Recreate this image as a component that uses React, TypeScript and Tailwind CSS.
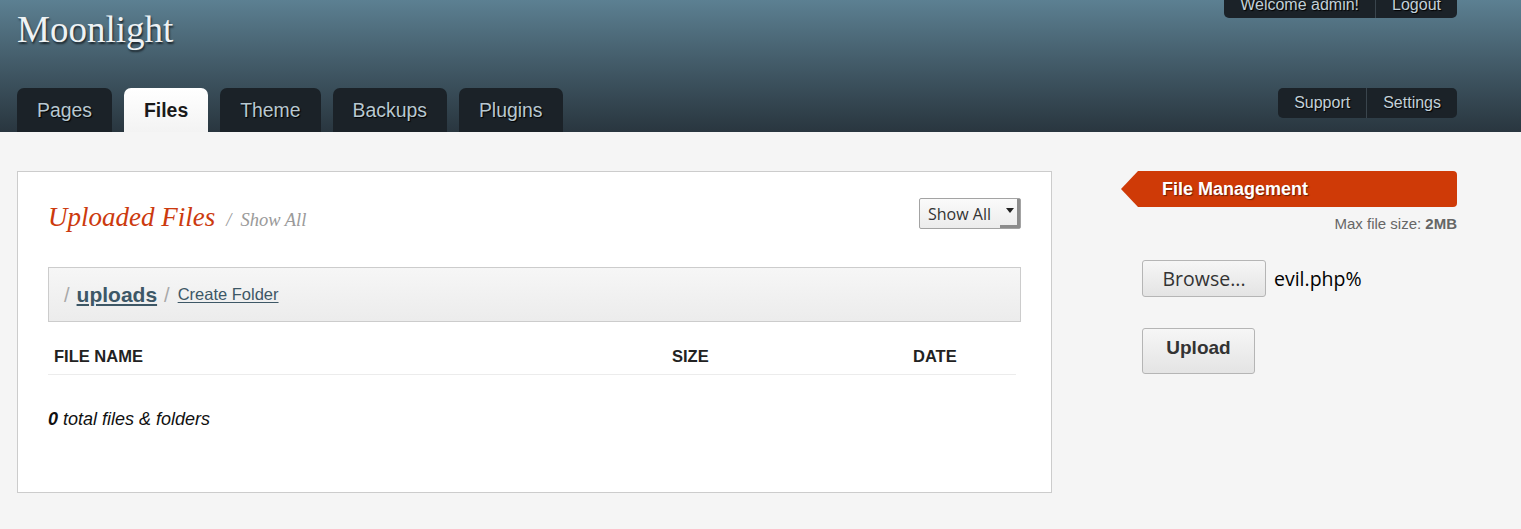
import type { ReactNode } from "react";

const SANS = "font-['Liberation_Sans',Arial,sans-serif]";
const SERIF = "font-['Liberation_Serif','Times_New_Roman',serif]";
const OPEN = "font-['Open_Sans','Noto_Sans',sans-serif]";

const TABS = ["Pages", "Files", "Theme", "Backups", "Plugins"];

function Tab({ label, active }: { label: string; active?: boolean }) {
  return (
    <div
      className={`flex h-[44px] items-center rounded-t-[7px] px-5 pt-[2px] text-[19.4px] ${
        active
          ? "bg-gradient-to-b from-white to-[#f3f3f3] font-bold text-[#1a1a1a]"
          : "bg-[#1b2228] text-[#b8c8d1] [text-shadow:1px_1px_1px_#000]"
      }`}
    >
      {label}
    </div>
  );
}

function DarkGroup({
  items,
  className,
}: {
  items: string[];
  className: string;
}) {
  return (
    <div className={`flex bg-[#1b2228] text-[16px] text-[#c2d0d8] ${className}`}>
      {items.map((item, i) => (
        <div
          key={item}
          className={`flex items-center px-4 [text-shadow:1px_1px_1px_#000] ${
            i > 0 ? "border-l border-[#3a454d]" : ""
          }`}
        >
          {item}
        </div>
      ))}
    </div>
  );
}

function Button({
  children,
  className,
}: {
  children: ReactNode;
  className: string;
}) {
  return (
    <div
      className={`flex items-center justify-center rounded-[3px] border border-[#b5b5b5] bg-gradient-to-b from-[#f6f6f6] to-[#e4e4e4] text-[#333] ${className}`}
    >
      {children}
    </div>
  );
}

export default function App() {
  return (
    <div className={`min-h-[529px] bg-[#f5f5f5] ${SANS}`}>
      {/* header */}
      <div className="h-[132px] overflow-hidden bg-gradient-to-b from-[#5c8092] to-[#29363f]">
        <div className="ml-[17px] flex h-full w-[1440px] flex-col justify-between">
          <div className="flex items-start justify-between">
            <div
              className={`pt-[6px] text-[37px] leading-[48px] text-[#eef2f4] [text-shadow:1px_2px_2px_#1c262d] ${SERIF}`}
            >
              Moonlight
            </div>
            <DarkGroup
              items={["Welcome admin!", "Logout"]}
              className="-mt-[9px] h-[27px] rounded-b-[5px]"
            />
          </div>
          <div className="flex items-end justify-between">
            <div className="flex gap-3">
              {TABS.map((t) => (
                <Tab key={t} label={t} active={t === "Files"} />
              ))}
            </div>
            <DarkGroup
              items={["Support", "Settings"]}
              className="mb-[14px] h-[30px] rounded-[5px]"
            />
          </div>
        </div>
      </div>

      {/* body */}
      <div className="ml-[17px] flex w-[1440px] items-start gap-[69px] pt-[39px]">
        <div className="w-[1035px] border border-[#cccccc] bg-white px-[30px] pb-[61px] pt-[26px]">
          <div className="flex h-[31px] items-center justify-between">
            <div className={`mt-[8px] flex items-baseline italic ${SERIF}`}>
              <span className="text-[27px] text-[#cc3a0e]">Uploaded Files</span>
              <span className="ml-[11px] text-[18.5px] text-[#9a9a9a]">/</span>
              <span className="ml-[9px] text-[18.5px] text-[#9a9a9a]">Show All</span>
            </div>
            <div
              className={`flex h-[31px] w-[102px] items-center justify-between rounded-[2px] border border-[#a3a3a3] bg-gradient-to-b from-[#fafafa] to-[#ececec] pl-[8px] text-[16px] text-[#333] ${OPEN}`}
            >
              <span>Show All</span>
              <span className="flex h-full w-[20px] items-start justify-center pt-[9px] shadow-[inset_-3px_-3px_0_#8c8c8c]">
                <span className="h-0 w-0 border-x-[4px] border-t-[5px] border-x-transparent border-t-[#222]" />
              </span>
            </div>
          </div>

          <div className="mt-[38px] flex h-[55px] items-center gap-[7px] border border-[#cccccc] bg-gradient-to-b from-[#f6f6f6] to-[#ececec] px-[15px]">
            <span className="text-[20px] text-[#a8a8a8]">/</span>
            <span className="text-[21px] font-bold text-[#3d5766] underline underline-offset-2">
              uploads
            </span>
            <span className="text-[20px] text-[#a8a8a8]">/</span>
            <span className="ml-[1px] text-[16.5px] text-[#3d5766] underline underline-offset-2">
              Create Folder
            </span>
          </div>

          <div className="mt-[16px] grid h-[37px] w-[968px] grid-cols-[618px_241px_1fr] items-center border-b border-[#ececec] pl-[6px] text-[16.5px] font-bold text-[#222]">
            <span>FILE NAME</span>
            <span>SIZE</span>
            <span>DATE</span>
          </div>

          <div className="mt-[32px] text-[18px] leading-[24px] italic text-[#111]">
            <b>0</b> total files &amp; folders
          </div>
        </div>

        {/* sidebar */}
        <div className="flex w-[336px] flex-col">
          <div className="flex h-[36px] items-stretch">
            <span className="h-0 w-0 border-y-[18px] border-r-[17px] border-y-transparent border-r-[#cf3a07]" />
            <div className="flex flex-1 items-center rounded-r-[4px] bg-[#cf3a07] pl-[24px] text-[18px] font-bold text-white [text-shadow:1px_1px_1px_#6b1e04]">
              File Management
            </div>
          </div>
          <div className="mt-[8px] text-right text-[15px] leading-[18px] text-[#666]">
            Max file size: <b>2MB</b>
          </div>
          <div className={`ml-[21px] mt-[27px] flex items-center gap-[8px] text-[19.5px] ${OPEN}`}>
            <Button className="h-[37px] w-[124px]">Browse...</Button>
            <span className="text-black">evil.php%</span>
          </div>
          <Button className="ml-[21px] mt-[31px] h-[46px] w-[113px] pb-[5px] text-[19px] font-bold">
            Upload
          </Button>
        </div>
      </div>
    </div>
  );
}
